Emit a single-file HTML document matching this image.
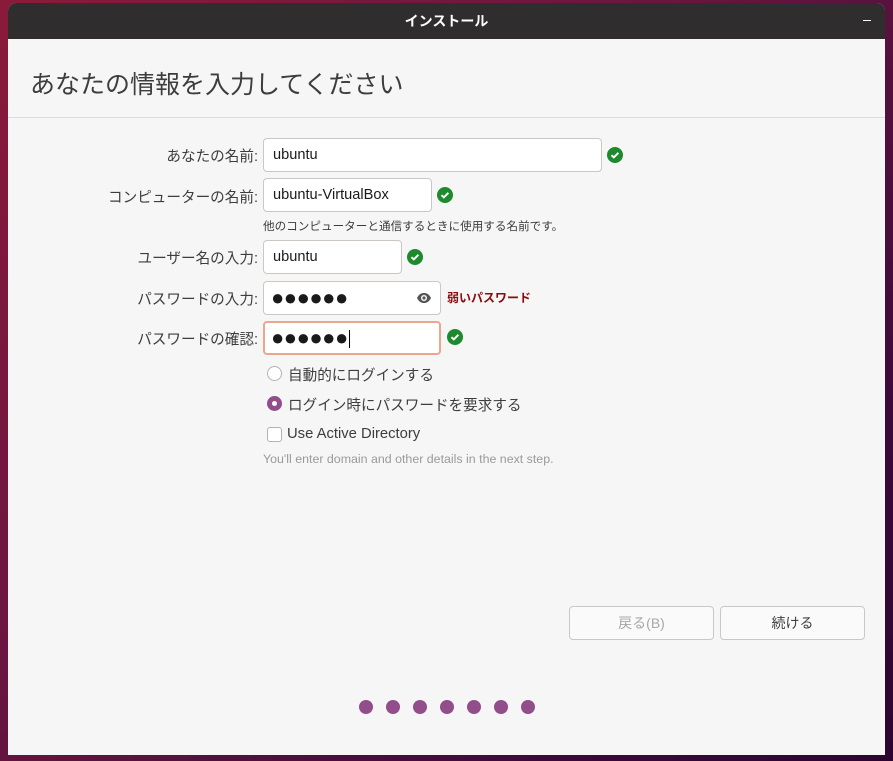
<!DOCTYPE html>
<html><head><meta charset="utf-8"><style>
*{margin:0;padding:0;box-sizing:border-box}
body{width:893px;height:761px;overflow:hidden;position:relative;font-family:"Liberation Sans","Noto Sans CJK JP",sans-serif;
background:linear-gradient(135deg,#8a1a3a 0%,#6a1640 40%,#3a0a3a 80%,#2c0630 100%);}
.win{position:absolute;left:8px;top:3px;width:877px;height:752px;background:#f6f6f6;border-radius:8px 8px 0 0;overflow:hidden}
.tb{height:36px;background:#2f2d2d;color:#fff;font-size:14px;font-weight:bold;text-align:center;line-height:36px}
.min{position:absolute;right:14px;top:17px;width:8px;height:1px;background:#fff}
.h1{position:absolute;left:22px;top:62px;font-size:25px;color:#3d3d3d}
.sep{position:absolute;left:0;right:0;top:114px;height:1px;background:#dcdcdc}
.a{position:absolute}
.lbl{position:absolute;right:627px;font-size:14.6px;color:#3d3d3d;white-space:nowrap}
.in{position:absolute;background:#fff;border:1px solid #cdc7c2;border-radius:4px;font-size:14.6px;color:#1a1a1a;padding-left:9px;line-height:33px}
.ok{position:absolute;width:16px;height:16px}
.t{position:absolute;font-size:14.6px;color:#3d3d3d;white-space:nowrap}
.btn{position:absolute;top:603px;width:145px;height:34px;border:1px solid #cdc7c2;border-radius:4px;background:#fafafa;font-size:14px;text-align:center;line-height:32px}
.dot{position:absolute;top:697px;width:14px;height:14px;border-radius:50%;background:#924d8b}
.dots{font-size:22px;letter-spacing:-0.5px;padding-left:7px;line-height:31px}
</style></head><body>
<div class="win">
<div class="tb">インストール</div><div class="min"></div>
<div class="h1">あなたの情報を入力してください</div>
<div class="sep"></div>

<div class="lbl" style="top:142px">あなたの名前:</div>
<div class="in" style="left:255px;top:135px;width:339px;height:34px">ubuntu</div>
<svg class="ok" style="left:599px;top:144px" viewBox="0 0 16 16"><circle cx="8" cy="8" r="8" fill="#1d8a2d"/><path d="M4.5 8.2l2.3 2.2 4.6-4.6" stroke="#fff" stroke-width="2" fill="none"/></svg>

<div class="lbl" style="top:183px">コンピューターの名前:</div>
<div class="in" style="left:255px;top:175px;width:169px;height:34px">ubuntu-VirtualBox</div>
<svg class="ok" style="left:429px;top:184px" viewBox="0 0 16 16"><circle cx="8" cy="8" r="8" fill="#1d8a2d"/><path d="M4.5 8.2l2.3 2.2 4.6-4.6" stroke="#fff" stroke-width="2" fill="none"/></svg>
<div class="t" style="left:255px;top:215px;font-size:11.6px">他のコンピューターと通信するときに使用する名前です。</div>

<div class="lbl" style="top:244px">ユーザー名の入力:</div>
<div class="in" style="left:255px;top:237px;width:139px;height:34px">ubuntu</div>
<svg class="ok" style="left:399px;top:246px" viewBox="0 0 16 16"><circle cx="8" cy="8" r="8" fill="#1d8a2d"/><path d="M4.5 8.2l2.3 2.2 4.6-4.6" stroke="#fff" stroke-width="2" fill="none"/></svg>

<div class="lbl" style="top:285px">パスワードの入力:</div>
<div class="in dots" style="left:255px;top:278px;width:178px;height:34px">●●●●●●</div>
<svg class="a" style="left:408px;top:288px" width="16" height="14" viewBox="0 0 16 14"><path d="M1 7C3 3 5.5 2 8 2s5 1 7 5c-2 4-4.5 5-7 5S3 11 1 7z" fill="#555"/><circle cx="8" cy="7" r="3" fill="#fff"/><circle cx="8" cy="7" r="1.6" fill="#555"/></svg>
<div class="t" style="left:439px;top:286px;font-size:12px;font-weight:bold;color:#8b0a0a">弱いパスワード</div>

<div class="lbl" style="top:325px">パスワードの確認:</div>
<div class="in dots" style="left:255px;top:318px;width:178px;height:34px;border-color:#eea58c;border-width:2px;padding-left:6px;line-height:29px">●●●●●●<span style="display:inline-block;width:1px;height:18px;background:#000;vertical-align:middle;margin-left:1px"></span></div>
<svg class="ok" style="left:439px;top:326px" viewBox="0 0 16 16"><circle cx="8" cy="8" r="8" fill="#1d8a2d"/><path d="M4.5 8.2l2.3 2.2 4.6-4.6" stroke="#fff" stroke-width="2" fill="none"/></svg>

<div class="a" style="left:259px;top:363px;width:15px;height:15px;border:1px solid #b8b2ad;border-radius:50%;background:#fff"></div>
<div class="t" style="left:280px;top:361px">自動的にログインする</div>
<div class="a" style="left:259px;top:393px;width:15px;height:15px;border-radius:50%;background:#924d8b"><div style="position:absolute;left:5px;top:5px;width:5px;height:5px;border-radius:50%;background:#fff"></div></div>
<div class="t" style="left:280px;top:391px">ログイン時にパスワードを要求する</div>
<div class="a" style="left:259px;top:424px;width:15px;height:15px;border:1px solid #b8b2ad;border-radius:3px;background:#fff"></div>
<div class="t" style="left:279px;top:423px;font-size:14.8px">Use Active Directory</div>
<div class="t" style="left:255px;top:449px;font-size:12.4px;color:#9a9a9a">You'll enter domain and other details in the next step.</div>

<div class="btn" style="left:561px;color:#a8a8a8">戻る(B)</div>
<div class="btn" style="left:712px;color:#3d3d3d">続ける</div>

<div class="dot" style="left:351px"></div><div class="dot" style="left:378px"></div><div class="dot" style="left:405px"></div><div class="dot" style="left:432px"></div><div class="dot" style="left:459px"></div><div class="dot" style="left:486px"></div><div class="dot" style="left:513px"></div>
</div>
</body></html>
